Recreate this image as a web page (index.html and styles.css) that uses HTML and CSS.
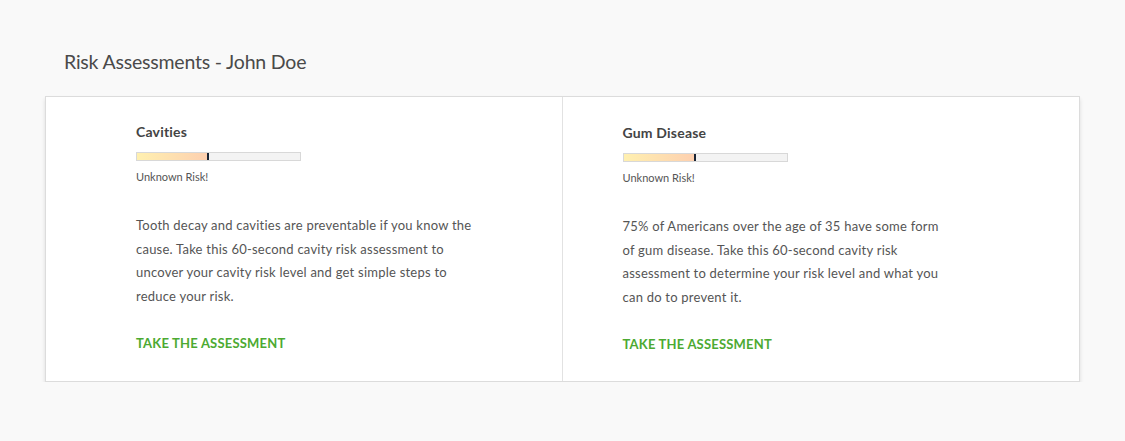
FILE: index.html
```html
<!DOCTYPE html>
<html lang="en">
<head>
    <meta charset="UTF-8">
    <title>Risk Assessments</title>
    <link rel="stylesheet" href="styles.css">
</head>
<body>

    <h1 class="page-title">Risk Assessments - John Doe</h1>

    <!-- Two assessment columns inside one card -->
    <div class="card">
        <div class="assessment assessment-left">
            <h2>Cavities</h2>
            <div class="meter">
                <div class="meter-fill" style="width: 70px"></div>
            </div>
            <p class="risk-label">Unknown Risk!</p>
            <p class="summary">Tooth decay and cavities are preventable if you know the cause. Take this 60-second cavity risk assessment to uncover your cavity risk level and get simple steps to reduce your risk.</p>
            <a class="take-link" href="#">TAKE THE ASSESSMENT</a>
        </div>

        <div class="assessment assessment-right">
            <h2>Gum Disease</h2>
            <div class="meter">
                <div class="meter-fill" style="width: 70px"></div>
            </div>
            <p class="risk-label">Unknown Risk!</p>
            <p class="summary">75% of Americans over the age of 35 have some form of gum disease. Take this 60-second cavity risk assessment to determine your risk level and what you can do to prevent it.</p>
            <a class="take-link" href="#">TAKE THE ASSESSMENT</a>
        </div>
    </div>

</body>
</html>
```

FILE: styles.css
```css
body {
    margin: 0;
    padding: 50px 45px 0 45px;
    background-color: #f9f9f9;
    font-family: Lato, "Open Sans", sans-serif;
    color: #555;
}
.page-title {
    margin: 0 0 23px 19px;
    font-size: 19.5px;
    font-weight: normal;
    color: #4a4a4a;
    letter-spacing: -0.2px;
}
.card {
    display: grid;
    grid-template-columns: 1fr 1fr;
    width: 1033px;
    background-color: white;
    border: 1px solid #dcdcdc;
    box-shadow: 0 3px 4px rgba(0, 0, 0, 0.12);
}
.assessment {
    padding: 26px 0 29px 0;
}
.assessment-left {
    padding-left: 90px;
    border-right: 1px solid #e2e2e2;
}
.assessment-left .summary {
    width: 342px;
}
.assessment-right {
    padding-left: 60px;
    padding-top: 27px;
}
.assessment-right .summary {
    width: 322px;
}
.assessment h2 {
    margin: 0 0 12px 0;
    font-size: 14px;
    font-weight: bold;
    color: #444;
    letter-spacing: 0.2px;
}
.meter {
    position: relative;
    width: 163px;
    height: 7px;
    background-color: #f3f3f3;
    border: 1px solid #d8d8d8;
}
.meter-fill {
    height: 100%;
    background: linear-gradient(to right, #fff0b0, #fdd0b0);
    border-right: 2px solid #1a2535;
}
.risk-label {
    margin: 9px 0 0 0;
    font-size: 11px;
    color: #555;
}
.summary {
    margin: 31px 0 0 0;
    font-size: 13px;
    line-height: 23.7px;
    letter-spacing: 0.23px;
    color: #555;
}
.take-link {
    display: inline-block;
    margin-top: 26px;
    font-size: 13px;
    font-weight: bold;
    letter-spacing: 0.2px;
    color: #4caa32;
    text-decoration: none;
}
```
